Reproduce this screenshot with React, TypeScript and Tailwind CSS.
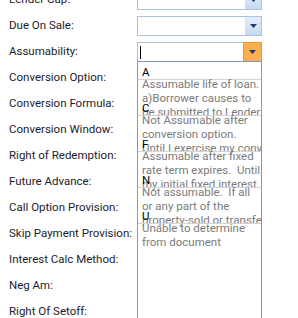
import React from "react";

const labels = [
  "Lender Cap:",
  "Due On Sale:",
  "Assumability:",
  "Conversion Option:",
  "Conversion Formula:",
  "Conversion Window:",
  "Right of Redemption:",
  "Future Advance:",
  "Call Option Provision:",
  "Skip Payment Provision:",
  "Interest Calc Method:",
  "Neg Am:",
  "Right Of Setoff:",
];

const items: { code: string; lines: string[] }[] = [
  { code: "A", lines: ["Assumable life of loan.", "a)Borrower causes to", "be submitted to Lender"] },
  { code: "C", lines: ["Not Assumable after", "conversion option.", "Until I exercise my conversion"] },
  { code: "F", lines: ["Assumable after fixed", "rate term expires.\u00a0 Until", "my initial fixed interest"] },
  { code: "N", lines: ["Not assumable.\u00a0 If all", "or any part of the", "property-sold or transferred"] },
  { code: "U", lines: ["Unable to determine", "from document"] },
];

function Arrow() {
  return (
    <svg width="7" height="4" viewBox="0 0 7 4">
      <path d="M0 0 H7 L3.5 4 Z" fill="#1e3a6e" />
    </svg>
  );
}

function Combo({ active }: { active?: boolean }) {
  return (
    <div
      className={
        "flex h-[20px] w-[125px] items-stretch border bg-white " +
        (active ? "border-[#a9c1e2] border-r-[#e8973a]" : "border-[#a9c1e2]")
      }
    >
      <div className="flex flex-1 items-center pl-[2px]">
        {active && <div className="h-[13px] w-px bg-black" />}
      </div>
      {active ? (
        <div className="-my-px flex w-[18px] items-center justify-center border border-r-0 border-[#e8973a] bg-[#fbb050]">
          <Arrow />
        </div>
      ) : (
        <div className="flex w-[16px] items-center justify-center bg-gradient-to-b from-[#e4eefb] to-[#c6d9f3]">
          <Arrow />
        </div>
      )}
    </div>
  );
}

export default function App() {
  return (
    <div
      className="relative h-[318px] w-[298px] overflow-hidden bg-white text-[11.5px]"
      style={{ fontFamily: 'Roboto, "Segoe UI", sans-serif' }}
    >
      <div className="-mt-[13px] flex flex-col">
        {labels.map((l, i) => (
          <div key={l} className="flex h-[26px] items-center">
            <div className="w-[137px] whitespace-nowrap pl-[9px] text-[#1d1b2e]">{l}</div>
            {i < 3 && <Combo active={i === 2} />}
          </div>
        ))}
      </div>
      <div className="absolute left-[137px] top-[61px] flex h-[280px] w-[125px] flex-col overflow-hidden border border-[#8196c2] bg-white">
        {items.map((it) => (
          <div key={it.code} className="flex h-[36px] shrink-0 flex-col">
            <div className="h-[20px] px-[4px] pt-[3px] leading-[14px] text-black">{it.code}</div>
            <div className="h-px shrink-0 bg-[#d4d4d4]" />
            <div className="-mt-[3px] px-[4px] leading-[14px] text-[#7b7b7b]">
              {it.lines.map((ln) => (
                <div key={ln} className="whitespace-nowrap">
                  {ln}
                </div>
              ))}
            </div>
          </div>
        ))}
      </div>
    </div>
  );
}
